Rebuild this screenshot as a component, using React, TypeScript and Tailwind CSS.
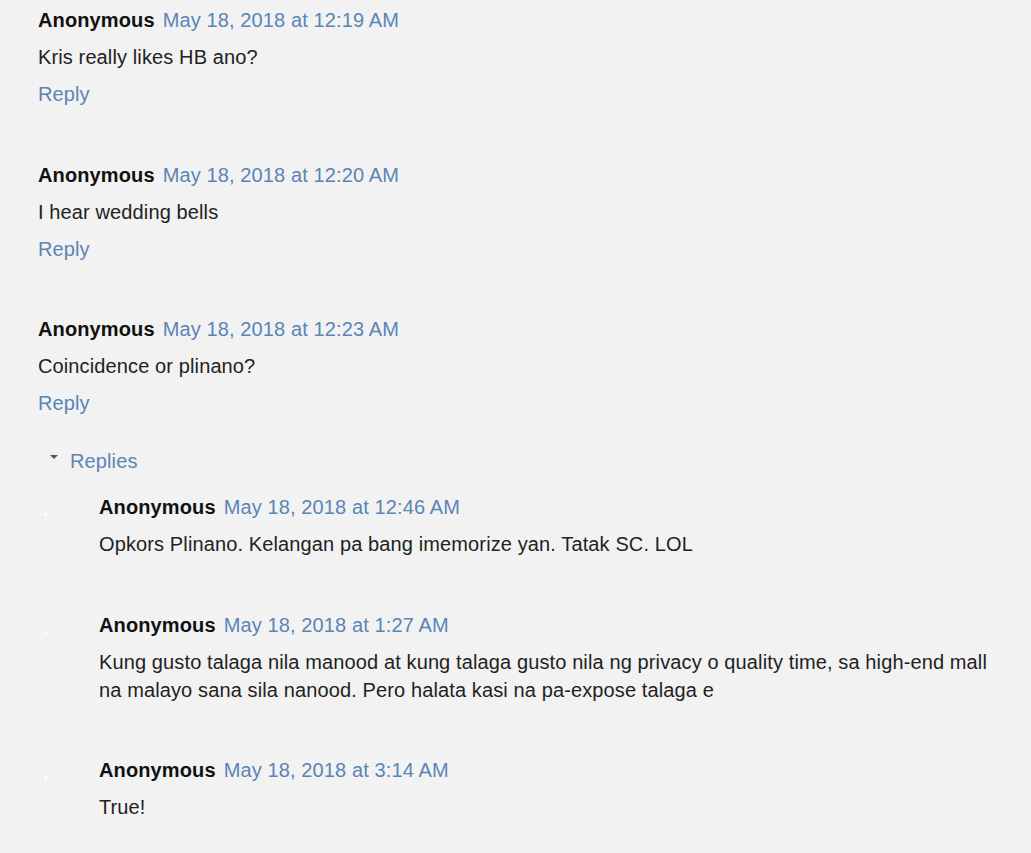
const comments = [
  { time: "May 18, 2018 at 12:19 AM", body: "Kris really likes HB ano?" },
  { time: "May 18, 2018 at 12:20 AM", body: "I hear wedding bells" },
  { time: "May 18, 2018 at 12:23 AM", body: "Coincidence or plinano?" },
];

const replies = [
  { time: "May 18, 2018 at 12:46 AM", body: "Opkors Plinano. Kelangan pa bang imemorize yan. Tatak SC. LOL", gap: "" },
  {
    time: "May 18, 2018 at 1:27 AM",
    body: "Kung gusto talaga nila manood at kung talaga gusto nila ng privacy o quality time, sa high-end mall na malayo sana sila nanood. Pero halata kasi na pa-expose talaga e",
    gap: "mt-[53px]",
  },
  { time: "May 18, 2018 at 3:14 AM", body: "True!", gap: "mt-[52px]" },
];

function Header({ time }: { time: string }) {
  return (
    <div className="h-[28px] leading-[28px] whitespace-nowrap">
      <span className="font-bold text-[#111]">Anonymous</span>
      <span className="ml-[8px] text-[#5a85b5]">{time}</span>
    </div>
  );
}

export default function App() {
  return (
    <div
      className="w-[1031px] h-[853px] overflow-hidden bg-[#f2f2f2] text-[20px] text-[#222] tracking-[0.12px]"
      style={{ fontFamily: '"Liberation Sans", Arial, sans-serif' }}
    >
      <div className="pl-[38px] pt-[6px] pr-[21px]">
        {comments.map((c, i) => (
          <div key={c.time} className={i === 0 ? "" : i === 1 ? "mt-[53px]" : "mt-[52px]"}>
            <Header time={c.time} />
            <div className="mt-[9px] h-[28px] leading-[28px]">{c.body}</div>
            <div className="mt-[9px] h-[28px] leading-[28px] text-[#5a85b5]">Reply</div>
          </div>
        ))}

        {/* Replies thread */}
        <div className="mt-[30px] flex items-center h-[28px] leading-[28px]">
          <span className="ml-[12px] mr-[12px] w-0 h-0 border-l-[4px] border-r-[4px] border-t-[4px] border-l-transparent border-r-transparent border-t-[#555] -translate-y-[4px]" />
          <span className="text-[#5a85b5]">Replies</span>
        </div>

        <div className="mt-[18px]">
          {replies.map((r) => (
            <div key={r.time} className={`relative pl-[61px] ${r.gap}`}>
              <span className="absolute left-[6px] top-[20px] w-[3px] h-[3px] rounded-full bg-white" />
              <Header time={r.time} />
              <div className="mt-[9px] leading-[28px] max-w-[912px]">{r.body}</div>
            </div>
          ))}
        </div>
      </div>
    </div>
  );
}
